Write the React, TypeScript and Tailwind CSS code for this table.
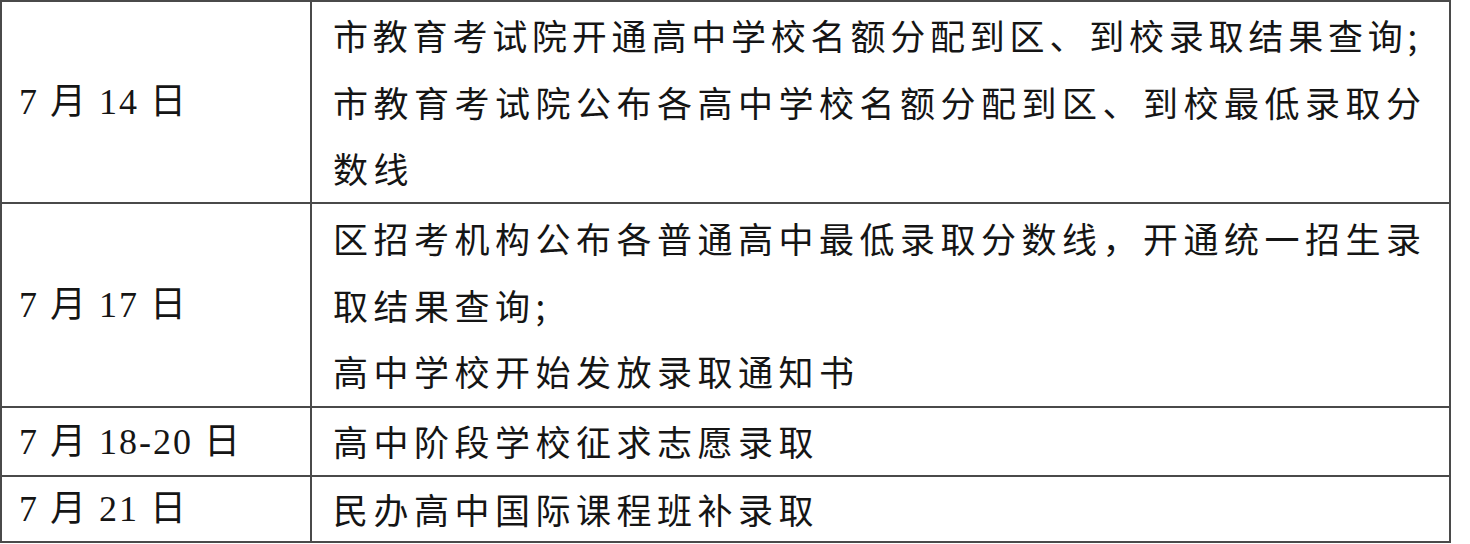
import React from "react";

type Line = {
  text: string;
  tight?: boolean;
};

type Row = {
  date: string;
  height: string;
  lines: Line[];
};

const rows: Row[] = [
  {
    date: "7 月 14 日",
    height: "h-[202px]",
    lines: [
      { text: "市教育考试院开通高中学校名额分配到区、到校录取结果查询;", tight: true },
      { text: "市教育考试院公布各高中学校名额分配到区、到校最低录取分" },
      { text: "数线" },
    ],
  },
  {
    date: "7 月 17 日",
    height: "h-[204px]",
    lines: [
      { text: "区招考机构公布各普通高中最低录取分数线，开通统一招生录" },
      { text: "取结果查询;" },
      { text: "高中学校开始发放录取通知书" },
    ],
  },
  {
    date: "7 月 18-20 日",
    height: "h-[69px]",
    lines: [{ text: "高中阶段学校征求志愿录取" }],
  },
  {
    date: "7 月 21 日",
    height: "h-[64px]",
    lines: [{ text: "民办高中国际课程班补录取" }],
  },
];

export default function App() {
  return (
    <div className="w-[1470px] h-[544px] bg-white">
      <div className="w-[1451px] border-2 border-[#4a4a4a] text-[#151515]">
        {rows.map((row, i) => (
          <div
            key={row.date}
            className={`flex ${row.height} ${
              i < rows.length - 1 ? "border-b-2 border-[#4a4a4a]" : ""
            }`}
          >
            <div className="w-[310px] shrink-0 border-r-2 border-[#4a4a4a] flex items-center pl-[17px]">
              <span className="text-[36px] leading-none tracking-[2px] font-['Liberation_Serif','Noto_Sans_CJK_SC',serif] whitespace-pre">
                {row.date}
              </span>
            </div>
            <div className="flex-1 min-w-0 flex flex-col justify-center pl-[21px]">
              {row.lines.map((line) => (
                <p
                  key={line.text}
                  className={`text-[35px] leading-[66.5px] whitespace-nowrap font-['Noto_Sans_CJK_SC',sans-serif] ${
                    line.tight ? "tracking-[4.8px]" : "tracking-[5.5px]"
                  }`}
                >
                  {line.text}
                </p>
              ))}
            </div>
          </div>
        ))}
      </div>
    </div>
  );
}
